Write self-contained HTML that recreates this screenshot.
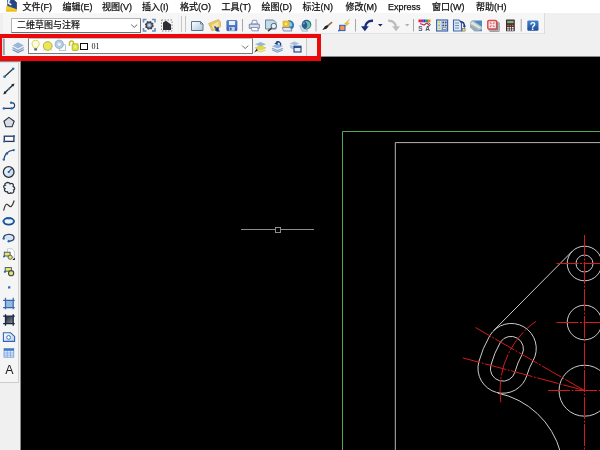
<!DOCTYPE html>
<html lang="zh-CN">
<head>
<meta charset="utf-8">
<title>AutoCAD</title>
<style>
html,body{margin:0;padding:0;}
body{width:600px;height:450px;position:relative;overflow:hidden;background:#000;font-family:"Liberation Sans","Noto Sans CJK SC",sans-serif;}
#chrome{position:absolute;left:0;top:0;width:600px;height:56px;background:#f0f0f0;border-bottom:1.5px solid #8a8a8a;}
#menubar{position:absolute;left:0;top:0;width:600px;height:13px;background:#fff;will-change:transform;}
#menubar span{position:absolute;top:1px;font-size:9px;line-height:13px;color:#111;white-space:nowrap;-webkit-text-stroke:0.25px #111;}
#tb1{position:absolute;left:3px;top:13px;width:175px;height:20px;background:#f6f6f6;}
#tb2{position:absolute;left:179px;top:13px;width:365px;height:20px;background:#f6f6f6;border-right:1px solid #dcdcdc;border-bottom:1px solid #e2e2e2;}
#tb3{position:absolute;left:3px;top:37px;width:303px;height:19px;background:#f4f4f4;border-right:1px solid #c8c8c8;}
.combo{position:absolute;will-change:transform;background:#fff;border:1px solid #b4b4b4;box-sizing:border-box;}
#ws{left:11px;top:17.5px;width:130px;height:15px;border-color:#b4b4b4 #707070 #707070 #b4b4b4;}
#ws b{position:absolute;left:5px;top:0;font-weight:normal;font-size:9px;line-height:13px;color:#111;white-space:nowrap;-webkit-text-stroke:0.2px #111;}
#layer{left:27.5px;top:38px;width:225px;height:16px;border-color:#c0c0c0 #808080 #787878 #808080;}
#layer b{position:absolute;left:62.5px;top:0.5px;font-weight:normal;font-family:"Liberation Serif","Noto Serif CJK SC",serif;font-size:8px;line-height:14px;color:#111;}
#side{position:absolute;left:0;top:57px;width:21px;height:393px;background:#f0f0f0;}
#sidebar{position:absolute;left:0;top:4.5px;width:18px;height:319px;background:#f5f5f5;border-right:1px solid #d2d2d2;border-bottom:1px solid #cdcdcd;border-top:1px solid #e0e0e0;}
#sidetop{position:absolute;left:0;top:4px;width:20px;height:1px;background:#8c8888;}
#sideedge{position:absolute;left:19.8px;top:0;width:1.2px;height:393px;background:#8a8a8a;}
#redbox{position:absolute;left:-2.3px;top:33.5px;width:314.8px;height:18.5px;border:4px solid #ea0a0c;border-bottom-width:5px;}
svg{position:absolute;left:0;top:0;}
#wrap{position:absolute;left:0;top:0;width:600px;height:450px;overflow:hidden;}
#icons,#sideicons{will-change:transform;}
</style>
</head>
<body>
<div id="wrap">
<div id="chrome">
  <div id="menubar">
    <span style="left:22.5px">文件(F)</span>
    <span style="left:62.5px">编辑(E)</span>
    <span style="left:102px">视图(V)</span>
    <span style="left:142px">插入(I)</span>
    <span style="left:180px">格式(O)</span>
    <span style="left:221.5px">工具(T)</span>
    <span style="left:261.5px">绘图(D)</span>
    <span style="left:302.5px">标注(N)</span>
    <span style="left:345.5px">修改(M)</span>
    <span style="left:388px">Express</span>
    <span style="left:432px">窗口(W)</span>
    <span style="left:476px">帮助(H)</span>
  </div>
  <div id="tb1"></div>
  <div id="tb2"></div>
  <div id="tb3"></div>
  <div class="combo" id="ws"><b>二维草图与注释</b></div>
  <div class="combo" id="layer"><b>01</b></div>
</div>

<!-- toolbar icons -->
<svg id="icons" width="600" height="60" viewBox="0 0 600 60">
  <defs>
    <linearGradient id="gnew" x1="0" y1="0" x2="1" y2="1"><stop offset="0" stop-color="#ffffff"/><stop offset="1" stop-color="#a9c8dc"/></linearGradient>
    <linearGradient id="ghelp" x1="0" y1="0" x2="0" y2="1"><stop offset="0" stop-color="#3f86d0"/><stop offset="1" stop-color="#1d4a9a"/></linearGradient>
    <linearGradient id="gsave" x1="0" y1="0" x2="0" y2="1"><stop offset="0" stop-color="#5d8fd6"/><stop offset="1" stop-color="#3a66b4"/></linearGradient>
  </defs>
  <!-- app icon -->
  <g>
    <path d="M7.2 0H14L16.7 2.5V10H7.2Z" fill="#2c5296"/>
    <path d="M11 0H14L16.7 2.5V9.5L12 7Z" fill="#274684"/>
    <path d="M8.2 0H10.4L9.2 2.6L11.8 4.2L10.8 5.4L7.6 3.4Z" fill="#e8eef6"/>
    <path d="M6.2 5.4L16.7 9.3V11.6H6.2Z" fill="#f2cb2e"/>
    <path d="M6.2 9.5H16.7V11.6H6.2Z" fill="#eec020"/>
  </g>
  <!-- chevrons -->
  <path d="M131.2 24.6L134.2 27.4L137.2 24.6" fill="none" stroke="#666" stroke-width="1"/>
  <path d="M242.2 45.6L245.2 48.6L248.2 45.6" fill="none" stroke="#666" stroke-width="1"/>
  <!-- gear / workspace settings -->
  <g>
    <path d="M143.5 22.5V19.5H146.5M152 19.5H155V22.5M155 28V31H152M146.5 31H143.5V28" fill="none" stroke="#6a8cc0" stroke-width="1.6"/>
    <circle cx="149.3" cy="25.3" r="3.6" fill="#8aa3c8" stroke="#3a3d48" stroke-width="1.6" stroke-dasharray="1.6 1.2"/>
    <circle cx="149.3" cy="25.3" r="3" fill="none" stroke="#44474f" stroke-width="1.2"/>
    <circle cx="149.3" cy="25.3" r="1.3" fill="#c9d6ea"/>
  </g>
  <!-- house dashed -->
  <g>
    <rect x="161.5" y="20" width="10.5" height="11" fill="none" stroke="#8a8a8a" stroke-width="1" stroke-dasharray="1.5 1.5"/>
    <path d="M163 30V22.5L166 20.8L171 24.5V30Z" fill="#2e2f34"/>
  </g>
  <!-- toolbar grippers -->
  <path d="M181.5 16V32M185.5 16V32" stroke="#c4c4c4" stroke-width="1"/>
  <path d="M3.8 38.5V55" stroke="#9aa3a8" stroke-width="2"/>
  <!-- new -->
  <g>
    <path d="M191.5 21.5H200.5L203 24V30.5H191.5Z" fill="url(#gnew)" stroke="#5b7490" stroke-width="1"/>
    <path d="M200.5 21.5V24H203" fill="none" stroke="#5b7490" stroke-width="0.8"/>
  </g>
  <!-- open -->
  <g>
    <path d="M208.5 23.5L218.5 19.5L220.5 22V27L212 31L210.5 27.5Z" fill="#e8c860" stroke="#c9a94a" stroke-width="0.6"/>
    <path d="M212 25L218.5 21.5V26L213 29Z" fill="#f4e3a0"/>
    <path d="M214.5 26.5L218 30H215.2M218 30V27.3" fill="none" stroke="#1d3f8c" stroke-width="1.5"/>
    <path d="M216 28.5L220 31.5L216.5 31.5Z" fill="#1d3f8c"/>
  </g>
  <!-- save -->
  <g>
    <rect x="226.8" y="20.5" width="10.2" height="10.2" rx="0.8" fill="url(#gsave)" stroke="#3158a6" stroke-width="0.6"/>
    <rect x="229" y="21" width="6" height="4" fill="#e9f0fa"/>
    <rect x="229.3" y="27" width="5.4" height="3.7" fill="#c6d4ea"/>
    <rect x="230" y="27.6" width="1.6" height="2.6" fill="#3a66b4"/>
  </g>
  <!-- separators -->
  <path d="M242.5 19V31.5M316 19V31.5M355.5 19V31.5M413.5 19V31.5M521.2 19V31.5" stroke="#a6a6a6" stroke-width="1"/>
  <!-- print -->
  <g>
    <path d="M251.5 24L252.5 20.3H256.5L257.5 24Z" fill="#f4f6fb" stroke="#7080a8" stroke-width="0.8"/>
    <path d="M249.3 24.2H259.3V28.3H249.3Z" fill="#d9deec" stroke="#6b7aa3" stroke-width="0.9"/>
    <path d="M251 27.5H257.5L258.5 30.8H252Z" fill="#ffffff" stroke="#7080a8" stroke-width="0.8"/>
  </g>
  <!-- preview -->
  <g>
    <path d="M265.5 20H273.5L276 22.5V29H265.5Z" fill="#c4dcea" stroke="#5e7a94" stroke-width="0.9"/>
    <circle cx="273.8" cy="26" r="2.7" fill="#e8f2f8" stroke="#4d6680" stroke-width="1"/>
    <path d="M271.6 28.2L268 31.2" stroke="#3c3c3c" stroke-width="1.5"/>
  </g>
  <!-- publish -->
  <g>
    <path d="M288 20.3C292 19.8 294.3 22.5 294 26C293.5 28.5 291.5 30 289 30Z" fill="#2a78b4"/>
    <path d="M288.5 21.5C291 21.5 292.5 23.5 292.2 26L288.5 27Z" fill="#8ec6e4"/>
    <rect x="283" y="21" width="6" height="6" fill="#f2c62a" stroke="#d2a018" stroke-width="0.5"/>
    <rect x="285" y="23" width="2" height="2" fill="#fbeaa0"/>
    <path d="M282.3 27.5H290.5L292 31H283.5Z" fill="#e4e8f2" stroke="#6a78a4" stroke-width="0.8"/>
  </g>
  <!-- 3d dwf globe -->
  <g>
    <path d="M299.5 25.5L306 27L308 31.3L302 31.3Z" fill="#cfdbe6" stroke="#9fb2c4" stroke-width="0.6"/>
    <circle cx="306.5" cy="24.6" r="4.8" fill="#2d5a9e"/>
    <path d="M305 21C308 20.5 310.8 22.5 310.5 25.5C310 28 308 29.2 305.5 28.8C308 27 308 23.5 305 21Z" fill="#6cc49a"/>
    <path d="M303 22.5C304 22 305.2 22.4 305 23.6C304.6 24.6 303.3 24.6 302.6 24Z" fill="#58b08c"/>
  </g>
  <!-- match properties brush -->
  <g>
    <path d="M327 25.2L331.6 21.5L332.6 22.8L328.2 26.6Z" fill="#9a6a44"/>
    <path d="M322.3 30L325 26.3L327.3 25L328.5 26.6L326.5 28.8Z" fill="#232323"/>
  </g>
  <!-- block editor -->
  <g>
    <path d="M349.5 19.3L344.5 23.8L346.8 24.3L343.8 27.5L349.3 23.2L347 22.8Z" fill="#f0cc30" stroke="#c8a020" stroke-width="0.4"/>
    <rect x="339.7" y="25.3" width="5.3" height="5.3" fill="#f09858" stroke="#2f5cb8" stroke-width="1"/>
    <path d="M338.3 31.2L340 29.5" stroke="#2f5cb8" stroke-width="1.4"/>
  </g>
  <!-- undo -->
  <g>
    <path d="M373 20.8C368 20.5 365.2 23.5 365.2 27.5" fill="none" stroke="#1a2f7a" stroke-width="2.4"/>
    <path d="M361 26.3L368.8 26.3L364.8 31.3Z" fill="#1a2f7a"/>
    <path d="M378 24L382.6 24L380.3 26.6Z" fill="#1a2560"/>
  </g>
  <!-- redo -->
  <g>
    <path d="M388.2 20.8C393.2 20.5 396 23.5 396 27.5" fill="none" stroke="#bcbcbc" stroke-width="2.4"/>
    <path d="M392.2 26.3L400 26.3L396 31.3Z" fill="#bcbcbc"/>
    <path d="M405 24L409.4 24L407.2 26.4Z" fill="#b0b0b0"/>
  </g>
  <!-- SA colors icon -->
  <g>
    <rect x="418.5" y="19.5" width="2.4" height="2.8" fill="#e02030"/>
    <rect x="420.9" y="19.5" width="2.4" height="2.8" fill="#c020c0"/>
    <rect x="423.3" y="19.5" width="2.4" height="2.8" fill="#2040d0"/>
    <rect x="425.7" y="19.5" width="2.4" height="2.8" fill="#20b040"/>
    <rect x="428.1" y="19.5" width="2.4" height="2.8" fill="#f08020"/>
    <path d="M420 23.5L424 25L427 23L430 26" fill="none" stroke="#c83040" stroke-width="1.3"/>
    <path d="M428.5 22.5L430.5 24.5L427.5 27.5" fill="none" stroke="#5a6a8a" stroke-width="1"/>
    <text x="418.3" y="31.4" font-family="'Liberation Sans',sans-serif" font-size="6.5" font-weight="bold" fill="#4a566e">S</text>
    <text x="425.3" y="31.4" font-family="'Liberation Sans',sans-serif" font-size="6.5" font-weight="bold" fill="#4a566e">A</text>
  </g>
  <!-- properties -->
  <g>
    <rect x="436.6" y="20" width="11" height="11" fill="#dfe8f2" stroke="#3a68b0" stroke-width="1.2"/>
    <path d="M441.3 20V31" stroke="#8aa4c8" stroke-width="0.6"/>
    <rect x="438.3" y="21.6" width="1.6" height="1.6" fill="#d8c830"/>
    <rect x="438.3" y="24.6" width="1.6" height="1.6" fill="#8ab838"/>
    <rect x="438.3" y="27.6" width="1.6" height="1.6" fill="#d8c830"/>
    <rect x="442.3" y="21.6" width="1.8" height="1.8" fill="#3a4a6a"/>
    <rect x="444.8" y="21.6" width="1.8" height="1.8" fill="#3a4a6a"/>
    <rect x="442.3" y="24.6" width="1.8" height="1.8" fill="#3a4a6a"/>
    <rect x="444.8" y="24.6" width="1.8" height="1.8" fill="#3a4a6a"/>
    <rect x="442.6" y="27.8" width="3.6" height="1.8" fill="#fff" stroke="#3a4a6a" stroke-width="0.6"/>
  </g>
  <!-- design center -->
  <g>
    <path d="M453.5 20H459L461.5 22.5V31H453.5Z" fill="#dfe8f2" stroke="#3a68b0" stroke-width="1.1"/>
    <path d="M455 23H459M455 25.5H459M455 28H459" stroke="#6a8cc0" stroke-width="1"/>
    <path d="M460 21.5C463 21.5 464.5 23.5 464.5 26.8" fill="none" stroke="#1e3a80" stroke-width="1.5"/>
    <path d="M462.6 25.8H466L464.4 28Z" fill="#1e3a80"/>
    <rect x="462.3" y="28.3" width="2.8" height="2.8" fill="#e8e070" stroke="#555" stroke-width="0.5"/>
  </g>
  <!-- tool palettes -->
  <g>
    <path d="M472 20.5H482V31.2H474.5L470 27V23Z" fill="#4c8cc0"/>
    <path d="M470 22.2L473 20.6L482 26.8V29.2L479 30.4L470 25.2Z" fill="#b6c0c2"/>
    <path d="M470.4 23.2L472.6 22L481 27.6L479.4 28.6Z" fill="#e4e8ea"/>
    <path d="M470 25.2L479 30.4L477.5 31.2H474.5L470 27Z" fill="#9eaaae"/>
  </g>
  <!-- sheet set -->
  <g>
    <path d="M499.2 22.5V31.3H489.5" fill="none" stroke="#8a8c90" stroke-width="1"/>
    <path d="M497.8 21.5V29.9H488.5" fill="none" stroke="#55575c" stroke-width="1"/>
    <rect x="487.8" y="20.5" width="8.8" height="8.4" rx="1.2" fill="#fbeeee" stroke="#dc4a4a" stroke-width="1.5"/>
    <path d="M489.8 22.4L494.6 27M494.6 22.4L489.8 27" stroke="#e88080" stroke-width="1.6"/>
    <circle cx="492.4" cy="24.6" r="1.2" fill="#eef0fa"/>
  </g>
  <!-- calculator -->
  <g>
    <rect x="506" y="19.5" width="8.8" height="11.8" rx="0.6" fill="#3a3030"/>
    <rect x="507.2" y="20.8" width="6.4" height="2.4" fill="#78b478"/>
    <g fill="#f0f0f0">
      <rect x="507.2" y="27" width="1.6" height="1.5"/><rect x="509.6" y="27" width="1.6" height="1.5"/><rect x="512" y="27" width="1.6" height="1.5"/>
      <rect x="507.2" y="29.2" width="1.6" height="1.5"/><rect x="509.6" y="29.2" width="1.6" height="1.5"/><rect x="512" y="29.2" width="1.6" height="1.5"/>
    </g>
    <g fill="#e05050">
      <rect x="507.2" y="24.7" width="1.6" height="1.5"/><rect x="509.6" y="24.7" width="1.6" height="1.5"/><rect x="512" y="24.7" width="1.6" height="1.5"/>
    </g>
  </g>
  <!-- help -->
  <g>
    <rect x="527.3" y="20.5" width="11.2" height="10.2" rx="1.2" fill="url(#ghelp)"/>
    <text x="532.9" y="29.6" text-anchor="middle" font-family="'Liberation Sans',sans-serif" font-size="10" font-weight="bold" fill="#fff">?</text>
  </g>

  <!-- layer properties icon -->
  <g>
    <path d="M12.5 45.5L18 42.3L23.8 45.5L18 48.5Z" fill="#9ab6d8"/>
    <path d="M12.5 47.5L18 50.5L23.8 47.5" fill="none" stroke="#86a4cc" stroke-width="1.3"/>
    <path d="M12.5 49.6L18 52.4L23.8 49.6" fill="none" stroke="#7e9cc6" stroke-width="1.3"/>
  </g>
  <!-- bulb -->
  <g>
    <path d="M35.6 40.3C33.4 40.3 32 41.9 32 43.8C32 45.6 33.6 46.4 34 48.2H37.2C37.6 46.4 39.2 45.6 39.2 43.8C39.2 41.9 37.8 40.3 35.6 40.3Z" fill="#fdfbe0" stroke="#dcd250" stroke-width="1"/>
    <rect x="34.2" y="48.3" width="2.9" height="2.2" fill="#5a6488"/>
  </g>
  <!-- sun -->
  <g>
    <circle cx="47.7" cy="46" r="4.4" fill="#ece650" stroke="#a8a848" stroke-width="0.9"/>
    <path d="M43.6 50.5L44.6 49.4M51.8 50.5L50.8 49.4" stroke="#a8a848" stroke-width="0.8"/>
  </g>
  <!-- viewport freeze -->
  <g>
    <rect x="59.3" y="44.8" width="6.3" height="5.7" fill="#fff" stroke="#a4b8cc" stroke-width="0.8"/>
    <circle cx="59.2" cy="44.3" r="4.1" fill="#b4cce0" stroke="#8aa8c4" stroke-width="0.8"/>
    <circle cx="59.2" cy="44.3" r="1.7" fill="#e6f0f8"/>
  </g>
  <!-- lock open -->
  <g>
    <path d="M69.5 46V43C69.5 40.2 73.5 40.2 73.5 43V44" fill="none" stroke="#c2c030" stroke-width="1.5"/>
    <rect x="72.2" y="43.8" width="6" height="6.6" rx="0.8" fill="#e4e440" stroke="#a4a428" stroke-width="0.8"/>
    <rect x="74.7" y="45.6" width="1.2" height="2.4" fill="#f8f8b0"/>
  </g>
  <!-- color square -->
  <rect x="80.5" y="43.5" width="7" height="6" fill="#fff" stroke="#111" stroke-width="1"/>

  <!-- layer tools right -->
  <g>
    <path d="M255 44.3L260.5 42L266 44.3L260.5 46.6Z" fill="#94b4dc"/>
    <path d="M255 47.8L260.5 45.8L266 47.8L260.5 50.2Z" fill="#e6dc3c" stroke="#c4bc30" stroke-width="0.5"/>
    <path d="M256.5 50.3L260.5 52L265.5 50" fill="none" stroke="#d8ce40" stroke-width="1"/>
    <path d="M254.2 52.4L256.8 48.6L257.8 50.6Z" fill="#2a2a3a"/>
  </g>
  <g>
    <path d="M272 46.2L277.5 43.8L283 46.2L277.5 48.6Z" fill="#94b4dc"/>
    <path d="M272 48.2L277.5 50.6L283 48.2" fill="none" stroke="#86a4cc" stroke-width="1.2"/>
    <path d="M272.3 50L277.5 52.2L282.7 50" fill="none" stroke="#7e9cc6" stroke-width="1.1"/>
    <path d="M280.5 45.5C281.5 42.5 278.5 40.8 276.3 42.3" fill="none" stroke="#1e3a80" stroke-width="1.4"/>
    <path d="M274.3 43.8L277.8 41L277.6 44.8Z" fill="#1e3a80"/>
  </g>
  <g>
    <path d="M289.5 43.6L294.5 41.6L299.5 43.6L294.5 45.6Z" fill="#a4c0e0"/>
    <path d="M289.8 45.4L294.5 47.4L297 46.3" fill="none" stroke="#94b0d8" stroke-width="1.1"/>
    <path d="M290.3 47.2L293.2 48.5" fill="none" stroke="#94b0d8" stroke-width="1.1"/>
    <rect x="294" y="46.2" width="7" height="5.8" fill="#e4ecf6" stroke="#1e3f86" stroke-width="1.1"/>
    <path d="M294 47.2H301" stroke="#1e3f86" stroke-width="1.4"/>
  </g>
</svg>
<div id="side"><div id="sidebar"></div><div id="sideedge"></div><div id="sidetop"></div></div>


<!-- left draw toolbar icons -->
<svg id="sideicons" width="22" height="450" viewBox="0 0 22 450">
  <defs>
    <linearGradient id="gcir" x1="0" y1="0" x2="1" y2="1"><stop offset="0" stop-color="#ffffff"/><stop offset="1" stop-color="#b9d0e8"/></linearGradient>
    <linearGradient id="ggrad" x1="0" y1="0" x2="1" y2="1"><stop offset="0" stop-color="#1b274e"/><stop offset="1" stop-color="#8a8f72"/></linearGradient>
    <pattern id="hat" width="2" height="2" patternUnits="userSpaceOnUse"><rect width="2" height="2" fill="#dbe6f4"/><path d="M0 0L2 2M2 0L0 2" stroke="#6a9ad0" stroke-width="0.6"/></pattern>
  </defs>
  <!-- line -->
  <path d="M4.5 76.7L13.2 68.8" stroke="#26303e" stroke-width="1.2"/>
  <circle cx="4.5" cy="76.7" r="1.3" fill="#1f78b4"/><circle cx="13.2" cy="68.8" r="1.3" fill="#1f78b4"/>
  <!-- xline -->
  <path d="M4.6 93L13.2 84.8" stroke="#20242c" stroke-width="1.3"/>
  <path d="M3.2 94.4L6.6 93.2L4.6 91Z" fill="#20242c"/><path d="M14.6 83.4L11.2 84.6L13.2 86.8Z" fill="#20242c"/>
  <circle cx="8.9" cy="88.9" r="1.1" fill="#3a78b8"/>
  <!-- polyline -->
  <path d="M3.6 108.4H11.6C15.6 108.4 15.8 102.7 11.1 102.7" fill="none" stroke="#243a66" stroke-width="1.2"/>
  <circle cx="3.8" cy="108.4" r="1.2" fill="#1f6cb4"/><circle cx="11.6" cy="108.4" r="1.2" fill="#1f6cb4"/><circle cx="11.1" cy="102.8" r="1.2" fill="#1f6cb4"/>
  <!-- polygon -->
  <path d="M8.9 117.4L14.2 121.3L12.1 126.8H5.8L3.9 121.3Z" fill="#d6dde8" stroke="#2c3038" stroke-width="1.1"/>
  <!-- rectangle -->
  <rect x="4.3" y="136.2" width="9.6" height="5.2" fill="#fafcff" stroke="#243658" stroke-width="1.3"/>
  <circle cx="14" cy="136.2" r="1.1" fill="#1f6cb4"/><circle cx="4.2" cy="141.5" r="1.1" fill="#1f6cb4"/>
  <!-- arc -->
  <path d="M3.8 159.8C4.6 154 8.5 150.6 13.8 150" fill="none" stroke="#2c3e5c" stroke-width="1.2"/>
  <circle cx="3.8" cy="159.6" r="1.2" fill="#1f6cb4"/><circle cx="7" cy="153.5" r="1.2" fill="#1f6cb4"/><circle cx="13.7" cy="150.1" r="1.2" fill="#1f6cb4"/>
  <!-- circle -->
  <circle cx="8.7" cy="172" r="5.3" fill="url(#gcir)" stroke="#2a2e38" stroke-width="1.3"/>
  <path d="M8.7 172L11.7 168.6" stroke="#2a4a80" stroke-width="1.1"/>
  <circle cx="8.7" cy="172" r="1.1" fill="#1f5ca8"/>
  <!-- revcloud -->
  <path d="M6 183C7.5 182 9.5 182.6 10 183.8C12 182.8 14 184 13.2 186.3C15 187.2 15.2 189.6 13.6 190C14.6 192 12.6 194 10.6 192.8C9.6 194 7.4 193.4 7.4 191.8C5 192 3.6 190 5 188.6C3 187.6 3.4 185.4 5.2 185.2C4.4 184.4 5 183.4 6 183Z" fill="#eef3fa" stroke="#2e3440" stroke-width="1.3"/>
  <!-- spline -->
  <path d="M3.6 210.6C4.6 207 5.4 203.8 7 204.2C8.8 204.8 9.4 207.4 11.2 206.4C12.8 205.4 13.4 203 14.2 200.5" fill="none" stroke="#3a3a3a" stroke-width="1.2"/>
  <!-- ellipse -->
  <ellipse cx="8.7" cy="221.3" rx="5.2" ry="3.3" fill="#eef4fb" stroke="#1b4a94" stroke-width="1.8"/>
  <circle cx="8.7" cy="218.2" r="1.2" fill="#1f6cb4"/><circle cx="3.5" cy="221.3" r="1.1" fill="#1f6cb4"/><circle cx="13.9" cy="221.3" r="1.1" fill="#1f6cb4"/>
  <!-- ellipse arc -->
  <ellipse cx="8.7" cy="237.8" rx="4" ry="2.3" fill="#d4e2f2"/>
  <path d="M3.6 238.4C3.4 233.4 14 233 14 237.6C14 240 11.6 241.2 8.9 241.2" fill="none" stroke="#30486e" stroke-width="1.4"/>
  <circle cx="3.7" cy="238.6" r="1.2" fill="#1f6cb4"/><circle cx="8.7" cy="241.2" r="1.2" fill="#1f6cb4"/>
  <!-- insert block -->
  <path d="M7.5 248.8H12L14.4 251V257.2H7.5Z" fill="#ffffff" stroke="#b4bcc8" stroke-width="0.7"/>
  <rect x="4.3" y="252.2" width="5.8" height="3.8" fill="#eae66a" stroke="#3a5468" stroke-width="0.9"/>
  <circle cx="10.2" cy="257.2" r="2.1" fill="#e6e070" stroke="#4a5c50" stroke-width="0.9"/>
  <circle cx="4" cy="256.6" r="1" fill="#1f6cb4"/>
  <path d="M14.8 257.6V260H12.4Z" fill="#111"/>
  <!-- make block -->
  <rect x="5.2" y="267.6" width="6.2" height="3.6" fill="#ece870" stroke="#3a5060" stroke-width="0.9"/>
  <circle cx="11.1" cy="273.2" r="2.6" fill="#e4e078" stroke="#3e4c44" stroke-width="1.1"/>
  <circle cx="4.9" cy="271.8" r="1.1" fill="#1f6cb4"/>
  <!-- point -->
  <rect x="8.1" y="286.3" width="2.2" height="2.2" fill="#2f62b4"/>
  <!-- hatch -->
  <rect x="5.5" y="300.4" width="7.7" height="7.2" fill="url(#hat)"/>
  <path d="M5.5 297.8V309.3M13.2 297.8V309.3M3.1 300.4H14.7M3.1 307.6H14.7" stroke="#3468b0" stroke-width="1.2"/>
  <!-- gradient -->
  <rect x="5.5" y="316.2" width="7.7" height="7.4" fill="url(#ggrad)"/>
  <path d="M5.5 314.2V325.8M13.2 314.2V325.8M3.1 316.2H14.7M3.1 323.6H14.7" stroke="#18234a" stroke-width="1.3"/>
  <!-- region -->
  <path d="M3.4 332.8H10.6L14.6 336.4V341.4H3.4Z" fill="url(#gcir)" stroke="#2f66b8" stroke-width="1.1"/>
  <circle cx="8.6" cy="337.4" r="1.9" fill="#fff" stroke="#2f66b8" stroke-width="0.9"/>
  <!-- table -->
  <rect x="4" y="348.6" width="9.8" height="8.6" fill="#dce8f8" stroke="#5a8ad0" stroke-width="0.7"/>
  <rect x="4" y="348.6" width="9.8" height="2.2" fill="#3e78c8"/>
  <path d="M4 353H13.8M4 355.2H13.8M7.3 350.8V357.2M10.5 350.8V357.2" stroke="#7aa2dc" stroke-width="0.7"/>
  <!-- text A -->
  <text x="9.3" y="373.6" text-anchor="middle" font-family="'Liberation Sans',sans-serif" font-size="12.4" fill="#222">A</text>
</svg>
<!-- drawing -->
<svg id="dwg" width="600" height="450" viewBox="0 0 600 450" fill="none">
  <g stroke="#4fac4f" stroke-width="1">
    <path d="M342.5 450V131.5H600"/>
  </g>
  <g stroke="#b4b4b4" stroke-width="1">
    <path d="M395.3 450V142.6H600"/>
  </g>
  <g stroke="#8c8c8c" stroke-width="1">
    <path d="M241 229.5H314"/>
    <rect x="275.5" y="227.5" width="5" height="5" fill="#000"/>
  </g>
  <g stroke="#cccccc" stroke-width="1">
    <circle cx="584.5" cy="263.5" r="17.3"/>
    <circle cx="584.5" cy="263.5" r="8.5"/>
    <circle cx="584.5" cy="322.5" r="17.3"/>
    <circle cx="584.5" cy="390.7" r="25.5"/>
    <path d="M490.8 365.4 A97.0 97.0 0 0 1 500.5 342.0 A12.5 12.5 0 0 1 522.1 354.5 A72.0 72.0 0 0 0 515.0 371.9 A12.5 12.5 0 0 1 490.8 365.4 Z"/>
    <path d="M478.7 362.2 A109.5 109.5 0 0 1 489.7 335.8 A25.0 25.0 0 0 1 533.0 360.8 A59.5 59.5 0 0 0 527.0 375.1 A25.0 25.0 0 0 1 478.7 362.2 Z"/>
    <path d="M572.2 251.3L493.6 330.6"/>
    <path d="M497.8 393.1A82 82 0 0 1 560.4 452"/>
  </g>
  <g stroke="#d41a1a" stroke-width="1" stroke-dasharray="22 1.5 2 1.5">
    <path d="M584.5 235V452"/>
    <path d="M556.5 263.5H600"/>
    <path d="M556.5 322.5H600"/>
    <path d="M548 390.5H600"/>
    <path d="M584.5 390.5L462.8 357.9"/>
    <path d="M584.5 390.5L475.4 327.5"/>
    <path d="M500.8 402.3A84.5 84.5 0 0 1 536.0 321.3"/>
  </g>
</svg>

<div id="redbox"></div>
</div>
</body>
</html>
